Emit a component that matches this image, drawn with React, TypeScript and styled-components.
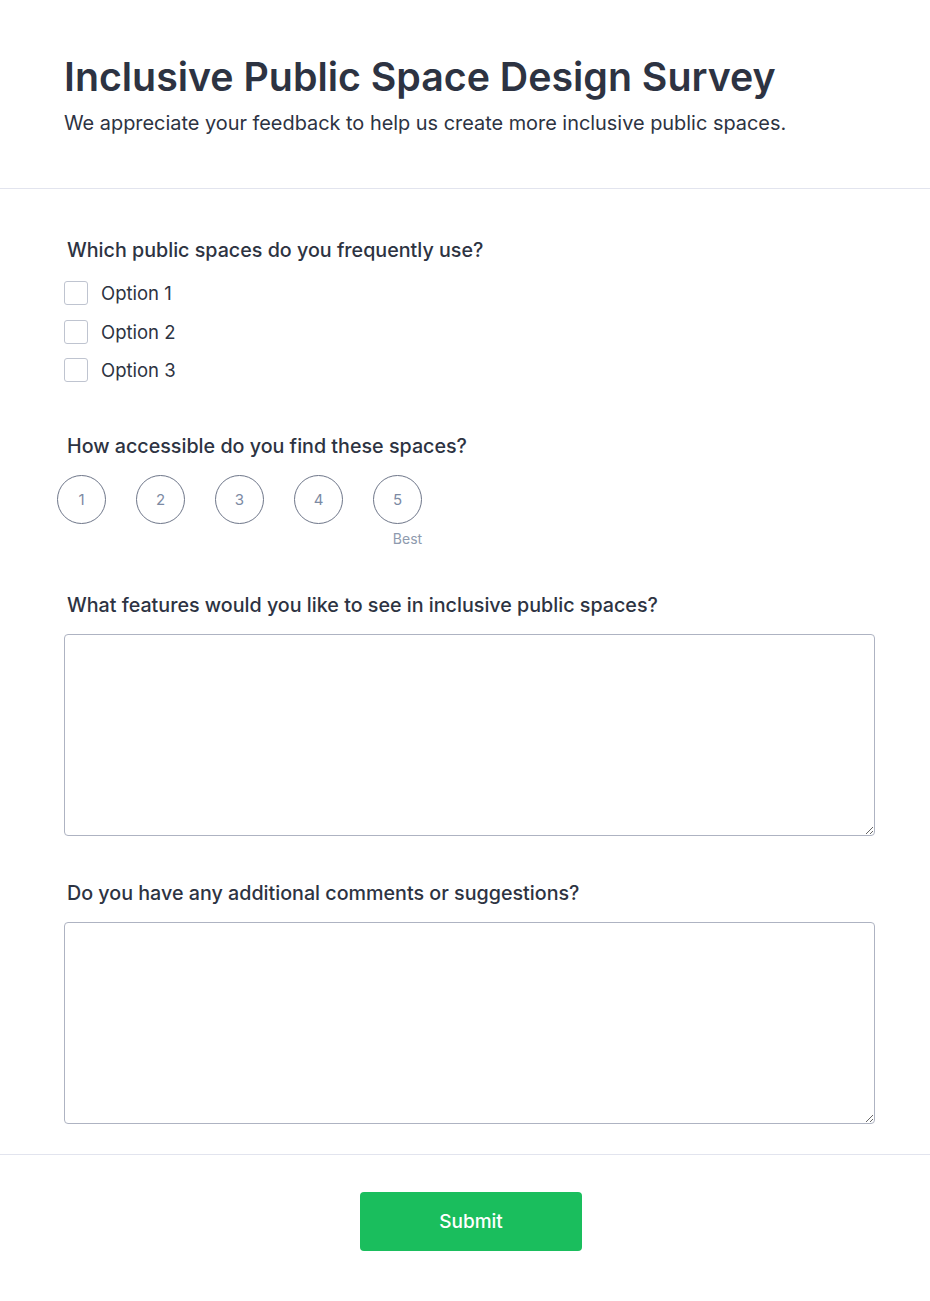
import React, { useState } from 'react';
import styled, { createGlobalStyle } from 'styled-components';

const GlobalStyle = createGlobalStyle`
  * {
    box-sizing: border-box;
  }
  body {
    margin: 0;
    background: #ffffff;
    font-family: Inter, 'Noto Sans', sans-serif;
    color: #2d3748;
  }
`;

const Page = styled.div`
  width: 930px;
  min-height: 1301px;
  background: #fff;
`;

const Header = styled.header`
  padding: 52px 64px 0;
  height: 189px;
  border-bottom: 1px solid #e2e4ee;
`;

const Title = styled.h1`
  margin: 0;
  font-size: 39.3px;
  line-height: 50px;
  font-weight: 600;
  color: #2d3342;
`;

const Subtitle = styled.p`
  margin: 8px 0 0;
  font-size: 19.9px;
  line-height: 26px;
  color: #2d3342;
`;

const Body = styled.form`
  padding: 49px 55px 30px 64px;
  display: flex;
  flex-direction: column;
`;

const Question = styled.div<{ $gap?: number }>`
  margin-bottom: ${(p) => p.$gap ?? 40}px;
`;

const Label = styled.div`
  font-size: 19.7px;
  line-height: 24px;
  font-weight: 500;
  color: #2d3342;
  padding-left: 3px;
  margin-bottom: 17px;
`;

const OptionList = styled.div`
  display: flex;
  flex-direction: column;
  gap: 14.5px;
  padding-top: 2px;
`;

const OptionRow = styled.label`
  display: flex;
  align-items: center;
  gap: 13px;
  font-size: 18.5px;
  line-height: 24px;
  color: #2d3342;
  cursor: pointer;
`;

const Box = styled.span<{ $checked: boolean }>`
  width: 24px;
  height: 24px;
  border: 1px solid #bfc4d0;
  border-radius: 3px;
  background: ${(p) => (p.$checked ? '#1bbd5e' : '#fff')};
`;

const RatingRow = styled.div`
  display: flex;
  gap: 30px;
  margin-left: -7px;
`;

const RatingItem = styled.div`
  display: flex;
  flex-direction: column;
  align-items: center;
  width: 49px;
`;

const Circle = styled.button<{ $active: boolean }>`
  width: 49px;
  height: 49px;
  border-radius: 50%;
  border: 1px solid #6e7689;
  background: ${(p) => (p.$active ? '#1bbd5e' : '#fff')};
  color: ${(p) => (p.$active ? '#fff' : '#7c8aa3')};
  font-family: Inter, sans-serif;
  font-size: 15px;
  padding: 0;
  cursor: pointer;
`;

const Hint = styled.span`
  margin-top: 6px;
  margin-left: 20px;
  font-size: 14px;
  line-height: 18px;
  color: #8e9aae;
`;

const TextArea = styled.textarea`
  display: block;
  width: 811px;
  height: 202px;
  border: 1px solid #aeb3c2;
  border-radius: 4px;
  font-family: Inter, sans-serif;
  font-size: 16px;
  padding: 10px;
  resize: vertical;
  outline: none;
`;

const Footer = styled.footer`
  border-top: 1px solid #e2e4ee;
  display: flex;
  justify-content: center;
  padding: 37px 0 0 12px;
`;

const SubmitButton = styled.button`
  width: 222px;
  height: 59px;
  border: none;
  border-radius: 4px;
  background: #1abe5d;
  color: #fff;
  font-family: Inter, sans-serif;
  font-size: 19px;
  font-weight: 500;
  cursor: pointer;
`;

const options = ['Option 1', 'Option 2', 'Option 3'];

const App: React.FC = () => {
  const [checked, setChecked] = useState<string[]>([]);
  const [rating, setRating] = useState<number | null>(null);

  const toggle = (opt: string) => {
    setChecked((prev) =>
      prev.includes(opt) ? prev.filter((o) => o !== opt) : [...prev, opt]
    );
  };

  return (
    <Page>
      <GlobalStyle />
      <Header>
        <Title>Inclusive Public Space Design Survey</Title>
        <Subtitle>
          We appreciate your feedback to help us create more inclusive public
          spaces.
        </Subtitle>
      </Header>

      <Body onSubmit={(e) => e.preventDefault()}>
        <Question $gap={52}>
          <Label>Which public spaces do you frequently use?</Label>
          <OptionList>
            {options.map((opt) => (
              <OptionRow key={opt} onClick={() => toggle(opt)}>
                <Box $checked={checked.includes(opt)} />
                {opt}
              </OptionRow>
            ))}
          </OptionList>
        </Question>

        <Question $gap={45}>
          <Label>How accessible do you find these spaces?</Label>
          <RatingRow>
            {[1, 2, 3, 4, 5].map((n) => (
              <RatingItem key={n}>
                <Circle
                  type='button'
                  $active={rating === n}
                  onClick={() => setRating(n)}
                >
                  {n}
                </Circle>
                {n === 5 && <Hint>Best</Hint>}
              </RatingItem>
            ))}
          </RatingRow>
        </Question>

        <Question $gap={45}>
          <Label>What features would you like to see in inclusive public spaces?</Label>
          <TextArea />
        </Question>

        <Question $gap={0}>
          <Label>Do you have any additional comments or suggestions?</Label>
          <TextArea />
        </Question>
      </Body>

      <Footer>
        <SubmitButton type='submit'>Submit</SubmitButton>
      </Footer>
    </Page>
  );
};

export default App;
